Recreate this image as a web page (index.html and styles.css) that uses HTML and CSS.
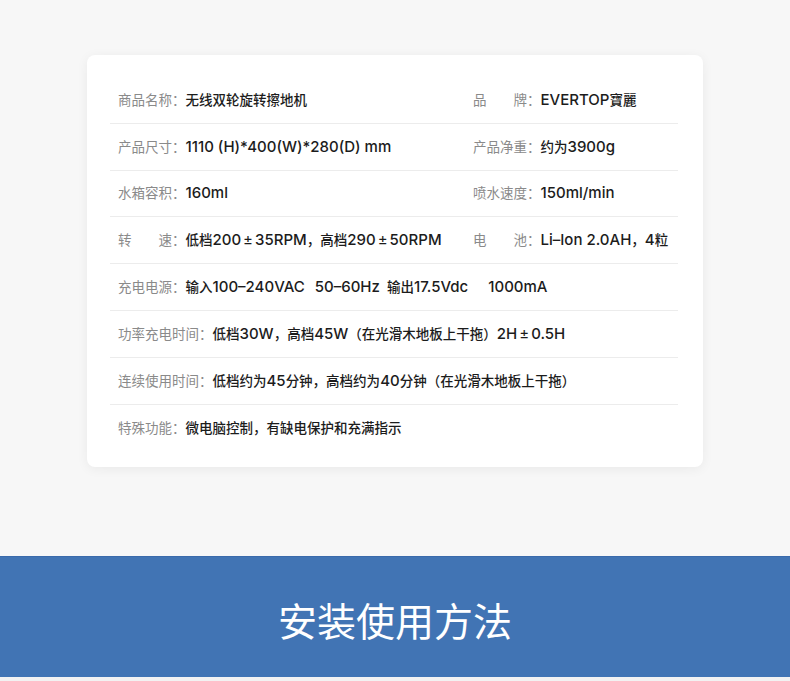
FILE: index.html
```html
<!DOCTYPE html>
<html lang="zh-CN">
<head>
<meta charset="utf-8">
<title>产品参数</title>
<link rel="stylesheet" href="styles.css">
</head>
<body>
<div class="page">
  <section class="spec-card">
    <div class="row two">
      <div class="cell"><span class="label">商品名称：</span><span class="value">无线双轮旋转擦地机</span></div>
      <div class="cell"><span class="label">品　　牌：</span><span class="value"><span class="en">EVERTOP</span>寶麗</span></div>
    </div>
    <div class="row two">
      <div class="cell"><span class="label">产品尺寸：</span><span class="value"><span class="en">1110 (H)*400(W)*280(D) mm</span></span></div>
      <div class="cell"><span class="label">产品净重：</span><span class="value">约为<span class="en">3900g</span></span></div>
    </div>
    <div class="row two">
      <div class="cell"><span class="label">水箱容积：</span><span class="value"><span class="en">160ml</span></span></div>
      <div class="cell"><span class="label">喷水速度：</span><span class="value"><span class="en">150ml/min</span></span></div>
    </div>
    <div class="row two">
      <div class="cell"><span class="label">转　　速：</span><span class="value">低档<span class="en">200<span class="pm">±</span>35RPM</span>，高档<span class="en">290<span class="pm">±</span>50RPM</span></span></div>
      <div class="cell"><span class="label">电　　池：</span><span class="value"><span class="en">Li–Ion 2.0AH</span>，<span class="en">4</span>粒</span></div>
    </div>
    <div class="row">
      <div class="cell"><span class="label">充电电源：</span><span class="value">输入<span class="en">100–240VAC<span class="gap-s"></span>50–60Hz<span class="gap-xs"></span></span>输出<span class="en">17.5Vdc<span class="gap-l"></span>1000mA</span></span></div>
    </div>
    <div class="row">
      <div class="cell"><span class="label">功率充电时间：</span><span class="value">低档<span class="en">30W</span>，高档<span class="en">45W</span>（在光滑木地板上干拖）<span class="en">2H<span class="pm">±</span>0.5H</span></span></div>
    </div>
    <div class="row">
      <div class="cell"><span class="label">连续使用时间：</span><span class="value">低档约为<span class="en">45</span>分钟，高档约为<span class="en">40</span>分钟（在光滑木地板上干拖）</span></div>
    </div>
    <div class="row">
      <div class="cell"><span class="label">特殊功能：</span><span class="value">微电脑控制，有缺电保护和充满指示</span></div>
    </div>
  </section>
  <section class="banner">
    <h2 class="banner-title">安装使用方法</h2>
  </section>
  <div class="bottom-strip"></div>
</div>
</body>
</html>
```
FILE: styles.css
```css
* { box-sizing: border-box; }
html, body {
  margin: 0;
  padding: 0;
  background: #f7f7f7;
}
body {
  font-family: "Inter", "Noto Sans CJK SC", sans-serif;
  font-size: 13.5px;
  color: #222;
}
.page {
  padding-top: 55px;
}
.spec-card {
  width: 616px;
  height: 412px;
  margin: 0 auto;
  background: #fff;
  border-radius: 8px;
  box-shadow: 0 2px 12px rgba(0, 0, 0, 0.06);
  padding: 22px 25px 16px 23px;
}
.row {
  height: 46.8px;
  display: grid;
  grid-template-columns: 1fr;
  align-items: center;
  border-bottom: 1px solid #ececec;
}
.row:last-child {
  border-bottom: none;
}
.row.two {
  grid-template-columns: 355px 1fr;
}
.cell {
  padding-left: 8px;
  white-space: nowrap;
  line-height: 20px;
  margin-top: -1px;
}
.label {
  color: #8a8a8a;
  font-family: "Noto Sans CJK SC", sans-serif;
  font-size: 13.5px;
}
.value {
  color: #1c1c1c;
  font-weight: 500;
  font-size: 13.5px;
}
.en {
  font-family: "Inter", sans-serif;
  font-size: 15px;
}
.pm {
  margin: 0 2px;
  font-weight: 400;
}
.gap-xs { display: inline-block; width: 7px; }
.gap-s { display: inline-block; width: 10px; }
.gap-l { display: inline-block; width: 20px; }
.banner {
  margin-top: 89px;
  height: 121px;
  background: #4174b4;
  border-top: 1px solid #3a6aab;
  display: flex;
  align-items: center;
  justify-content: center;
}
.banner-title {
  margin: 4px 0 0 0;
  color: #fff;
  font-family: "Noto Sans CJK SC", sans-serif;
  font-weight: 400;
  font-size: 39px;
  line-height: 1;
}
.bottom-strip {
  height: 4px;
  background: #f2f2f2;
}
```
